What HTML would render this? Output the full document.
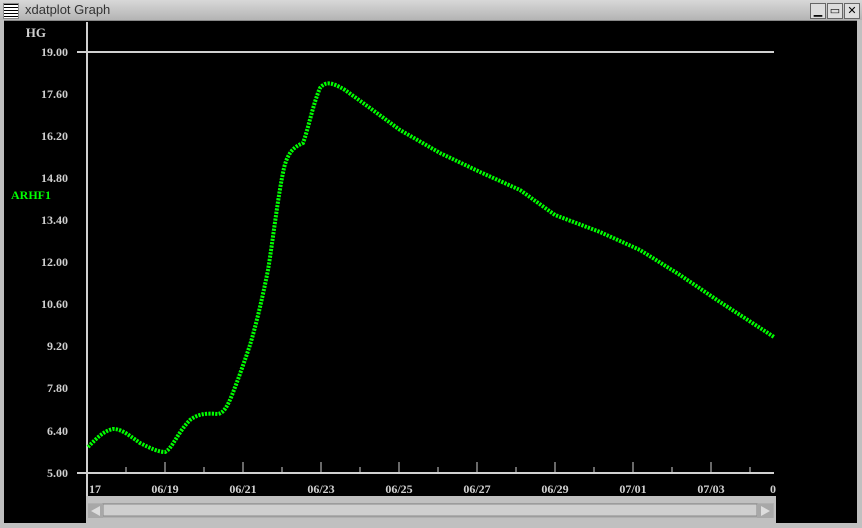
<!DOCTYPE html>
<html><head><style>
body{margin:0;width:862px;height:528px;background:#000;overflow:hidden;font-family:"Liberation Serif",serif;position:relative}
.title{position:absolute;left:0;top:0;width:862px;height:20px;background:linear-gradient(#d8d8d8,#b4b4b4);border-bottom:1px solid #888}
.title span{position:absolute;left:25px;top:2px;font:13px "Liberation Sans",sans-serif;color:#333}
.menu{position:absolute;left:3px;top:3px;width:14px;height:14px;background:repeating-linear-gradient(#000 0 1px,#fff 1px 3px);border:1px solid #888}
.btn{position:absolute;top:3px;width:14px;height:14px;background:#ddd;border:1px solid #666;font:11px "Liberation Sans";text-align:center;line-height:14px}
.frame{position:absolute;background:#c0c0c0}
</style></head><body>
<div class="title"><div class="menu"></div><span>xdatplot Graph</span>
<div class="btn" style="left:810px">▁</div><div class="btn" style="left:827px">▭</div><div class="btn" style="left:844px">✕</div></div>
<div class="frame" style="left:0;top:20px;width:4px;height:508px"></div>
<div class="frame" style="left:857px;top:20px;width:5px;height:508px"></div>
<div class="frame" style="left:0;top:523px;width:862px;height:5px"></div>
<svg width="862" height="528" style="position:absolute;left:0;top:0">
<g fill="#d0d0d0" font-family="Liberation Serif" font-weight="bold" font-size="12" text-anchor="end">
<text x="46" y="37" font-size="13">HG</text>
<text x="68" y="56">19.00</text><text x="68" y="98">17.60</text><text x="68" y="140">16.20</text><text x="68" y="182">14.80</text><text x="68" y="224">13.40</text><text x="68" y="266">12.00</text><text x="68" y="308">10.60</text><text x="68" y="350">9.20</text><text x="68" y="392">7.80</text><text x="68" y="435">6.40</text><text x="68" y="477">5.00</text>
</g>
<text x="11" y="199" fill="#00ff00" font-family="Liberation Serif" font-weight="bold" font-size="12">ARHF1</text>
<g stroke="#d0d0d0" stroke-width="2" fill="none">
<line x1="87" y1="22" x2="87" y2="496"/><line x1="77" y1="52" x2="774" y2="52"/><line x1="77" y1="473" x2="774" y2="473"/>
</g>
<g stroke="#d0d0d0" stroke-width="1">
<line x1="126" y1="473" x2="126" y2="467"/><line x1="165" y1="473" x2="165" y2="462"/><line x1="204" y1="473" x2="204" y2="467"/><line x1="243" y1="473" x2="243" y2="462"/><line x1="282" y1="473" x2="282" y2="467"/><line x1="321" y1="473" x2="321" y2="462"/><line x1="360" y1="473" x2="360" y2="467"/><line x1="399" y1="473" x2="399" y2="462"/><line x1="438" y1="473" x2="438" y2="467"/><line x1="477" y1="473" x2="477" y2="462"/><line x1="516" y1="473" x2="516" y2="467"/><line x1="555" y1="473" x2="555" y2="462"/><line x1="594" y1="473" x2="594" y2="467"/><line x1="633" y1="473" x2="633" y2="462"/><line x1="672" y1="473" x2="672" y2="467"/><line x1="711" y1="473" x2="711" y2="462"/><line x1="750" y1="473" x2="750" y2="467"/>
</g>
<g fill="#d0d0d0" font-family="Liberation Serif" font-weight="bold" font-size="12" text-anchor="middle">
<text x="95" y="493">17</text><text x="165" y="493">06/19</text><text x="243" y="493">06/21</text><text x="321" y="493">06/23</text><text x="399" y="493">06/25</text><text x="477" y="493">06/27</text><text x="555" y="493">06/29</text><text x="633" y="493">07/01</text><text x="711" y="493">07/03</text><text x="773" y="493">0</text>
</g>
<path d="M88,447 C95,440 103,431 113,429 C120,429 125,432 140,443 C150,448 158,452 165,452 C172,449 178,432 190,420 C198,414 205,413 218,414 C224,413 228,405 232,395 C238,380 245,360 250,345 C256,325 262,300 268,270 C273,240 278,195 284,168 C288,152 294,147 303,143 C308,130 313,104 320,88 C325,82 330,81 345,90 L370,108 L400,130 L440,153 L480,172 L520,190 L555,215 L600,232 L640,250 L680,275 L720,302 L774,337" fill="none" stroke="#00ff00" stroke-width="4" stroke-dasharray="2.2 1.2"/>
<rect x="86" y="496" width="690" height="27" fill="#c0c0c0"/>
<rect x="88" y="503" width="686" height="15" fill="#b0b0b0"/>
<rect x="103" y="504" width="654" height="12" fill="#cfcfcf" stroke="#888" stroke-width="1"/>
<rect x="88" y="504" width="15" height="14" fill="#a8a8a8"/>
<polygon points="100,506 91,511 100,516" fill="#ddd"/>
<rect x="757" y="504" width="16" height="14" fill="#a8a8a8"/>
<polygon points="761,506 770,511 761,516" fill="#ddd"/>
</svg>
</body></html>
